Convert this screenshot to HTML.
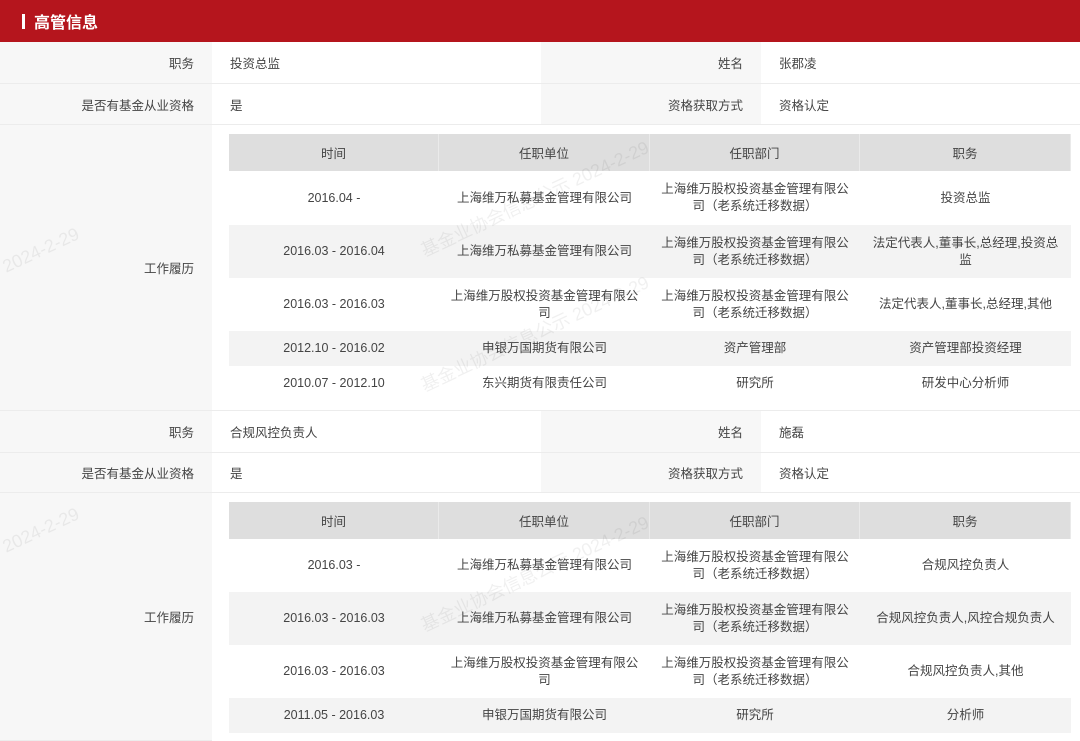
<!DOCTYPE html>
<html><head><meta charset="utf-8"><style>
*{margin:0;padding:0;box-sizing:border-box}
body{width:1080px;height:741px;overflow:hidden;background:#fff;font-family:"Liberation Sans","Noto Sans CJK SC",sans-serif;font-size:12.5px;color:#444;position:relative}
.a{position:absolute;display:flex;align-items:center}
.h{left:0;top:0;width:1080px;height:42px;background:#b5151d;color:#fff;font-weight:bold;font-size:16px;padding-left:22px}
.h:before{content:"";display:inline-block;width:3px;height:15px;background:#fff;margin-right:9px}
.lb{background:#f7f7f7;justify-content:flex-end;padding-right:18px;border-bottom:1px solid #ececec}
.vl{background:#fff;padding-left:18px;border-bottom:1px solid #ececec}
.th{background:#dedede;justify-content:center;text-align:center;border-right:1px solid #eaeaea}
.td{justify-content:center;text-align:center;line-height:17px;padding:0 8px}
.g{background:#f3f3f3}
.wm{position:absolute;color:rgba(0,0,0,0.06);font-size:18px;transform:rotate(-25deg);white-space:nowrap}
</style></head><body>
<div class="a h">高管信息</div>

<div class="a lb" style="left:0;top:42px;width:212px;height:42px">职务</div>
<div class="a vl" style="left:212px;top:42px;width:329px;height:42px">投资总监</div>
<div class="a lb" style="left:541px;top:42px;width:220px;height:42px">姓名</div>
<div class="a vl" style="left:761px;top:42px;width:319px;height:42px">张郡凌</div>
<div class="a lb" style="left:0;top:84px;width:212px;height:41px">是否有基金从业资格</div>
<div class="a vl" style="left:212px;top:84px;width:329px;height:41px">是</div>
<div class="a lb" style="left:541px;top:84px;width:220px;height:41px">资格获取方式</div>
<div class="a vl" style="left:761px;top:84px;width:319px;height:41px">资格认定</div>
<div class="a lb" style="left:0;top:125px;width:212px;height:286px">工作履历</div>

<div class="a th" style="left:229px;top:134px;width:210px;height:37px">时间</div>
<div class="a th" style="left:439px;top:134px;width:211px;height:37px">任职单位</div>
<div class="a th" style="left:650px;top:134px;width:210px;height:37px">任职部门</div>
<div class="a th" style="left:860px;top:134px;width:211px;height:37px">职务</div>

<div class="a td" style="left:229px;top:171px;width:210px;height:54px">2016.04 -</div>
<div class="a td" style="left:439px;top:171px;width:211px;height:54px">上海维万私募基金管理有限公司</div>
<div class="a td" style="left:650px;top:171px;width:210px;height:54px">上海维万股权投资基金管理有限公司（老系统迁移数据）</div>
<div class="a td" style="left:860px;top:171px;width:211px;height:54px">投资总监</div>

<div class="a g" style="left:229px;top:225px;width:842px;height:53px"></div>
<div class="a td" style="left:229px;top:225px;width:210px;height:53px">2016.03 - 2016.04</div>
<div class="a td" style="left:439px;top:225px;width:211px;height:53px">上海维万私募基金管理有限公司</div>
<div class="a td" style="left:650px;top:225px;width:210px;height:53px">上海维万股权投资基金管理有限公司（老系统迁移数据）</div>
<div class="a td" style="left:860px;top:225px;width:211px;height:53px">法定代表人,董事长,总经理,投资总监</div>

<div class="a td" style="left:229px;top:278px;width:210px;height:53px">2016.03 - 2016.03</div>
<div class="a td" style="left:439px;top:278px;width:211px;height:53px">上海维万股权投资基金管理有限公司</div>
<div class="a td" style="left:650px;top:278px;width:210px;height:53px">上海维万股权投资基金管理有限公司（老系统迁移数据）</div>
<div class="a td" style="left:860px;top:278px;width:211px;height:53px">法定代表人,董事长,总经理,其他</div>

<div class="a g" style="left:229px;top:331px;width:842px;height:35px"></div>
<div class="a td" style="left:229px;top:331px;width:210px;height:35px">2012.10 - 2016.02</div>
<div class="a td" style="left:439px;top:331px;width:211px;height:35px">申银万国期货有限公司</div>
<div class="a td" style="left:650px;top:331px;width:210px;height:35px">资产管理部</div>
<div class="a td" style="left:860px;top:331px;width:211px;height:35px">资产管理部投资经理</div>

<div class="a td" style="left:229px;top:366px;width:210px;height:35px">2010.07 - 2012.10</div>
<div class="a td" style="left:439px;top:366px;width:211px;height:35px">东兴期货有限责任公司</div>
<div class="a td" style="left:650px;top:366px;width:210px;height:35px">研究所</div>
<div class="a td" style="left:860px;top:366px;width:211px;height:35px">研发中心分析师</div>
<div style="position:absolute;left:212px;top:410px;width:868px;height:1px;background:#ececec"></div>

<div class="a lb" style="left:0;top:411px;width:212px;height:42px">职务</div>
<div class="a vl" style="left:212px;top:411px;width:329px;height:42px">合规风控负责人</div>
<div class="a lb" style="left:541px;top:411px;width:220px;height:42px">姓名</div>
<div class="a vl" style="left:761px;top:411px;width:319px;height:42px">施磊</div>
<div class="a lb" style="left:0;top:453px;width:212px;height:40px">是否有基金从业资格</div>
<div class="a vl" style="left:212px;top:453px;width:329px;height:40px">是</div>
<div class="a lb" style="left:541px;top:453px;width:220px;height:40px">资格获取方式</div>
<div class="a vl" style="left:761px;top:453px;width:319px;height:40px">资格认定</div>
<div class="a lb" style="left:0;top:493px;width:212px;height:248px">工作履历</div>

<div class="a th" style="left:229px;top:502px;width:210px;height:37px">时间</div>
<div class="a th" style="left:439px;top:502px;width:211px;height:37px">任职单位</div>
<div class="a th" style="left:650px;top:502px;width:210px;height:37px">任职部门</div>
<div class="a th" style="left:860px;top:502px;width:211px;height:37px">职务</div>

<div class="a td" style="left:229px;top:539px;width:210px;height:53px">2016.03 -</div>
<div class="a td" style="left:439px;top:539px;width:211px;height:53px">上海维万私募基金管理有限公司</div>
<div class="a td" style="left:650px;top:539px;width:210px;height:53px">上海维万股权投资基金管理有限公司（老系统迁移数据）</div>
<div class="a td" style="left:860px;top:539px;width:211px;height:53px">合规风控负责人</div>

<div class="a g" style="left:229px;top:592px;width:842px;height:53px"></div>
<div class="a td" style="left:229px;top:592px;width:210px;height:53px">2016.03 - 2016.03</div>
<div class="a td" style="left:439px;top:592px;width:211px;height:53px">上海维万私募基金管理有限公司</div>
<div class="a td" style="left:650px;top:592px;width:210px;height:53px">上海维万股权投资基金管理有限公司（老系统迁移数据）</div>
<div class="a td" style="left:860px;top:592px;width:211px;height:53px">合规风控负责人,风控合规负责人</div>

<div class="a td" style="left:229px;top:645px;width:210px;height:53px">2016.03 - 2016.03</div>
<div class="a td" style="left:439px;top:645px;width:211px;height:53px">上海维万股权投资基金管理有限公司</div>
<div class="a td" style="left:650px;top:645px;width:210px;height:53px">上海维万股权投资基金管理有限公司（老系统迁移数据）</div>
<div class="a td" style="left:860px;top:645px;width:211px;height:53px">合规风控负责人,其他</div>

<div class="a g" style="left:229px;top:698px;width:842px;height:35px"></div>
<div class="a td" style="left:229px;top:698px;width:210px;height:35px">2011.05 - 2016.03</div>
<div class="a td" style="left:439px;top:698px;width:211px;height:35px">申银万国期货有限公司</div>
<div class="a td" style="left:650px;top:698px;width:210px;height:35px">研究所</div>
<div class="a td" style="left:860px;top:698px;width:211px;height:35px">分析师</div>

<div class="wm" style="left:410px;top:185px">基金业协会信息公示 2024-2-29</div>
<div class="wm" style="left:410px;top:320px">基金业协会信息公示 2024-2-29</div>
<div class="wm" style="left:410px;top:560px">基金业协会信息公示 2024-2-29</div>
<div class="wm" style="left:0px;top:240px">2024-2-29</div>
<div class="wm" style="left:0px;top:520px">2024-2-29</div>
</body></html>
